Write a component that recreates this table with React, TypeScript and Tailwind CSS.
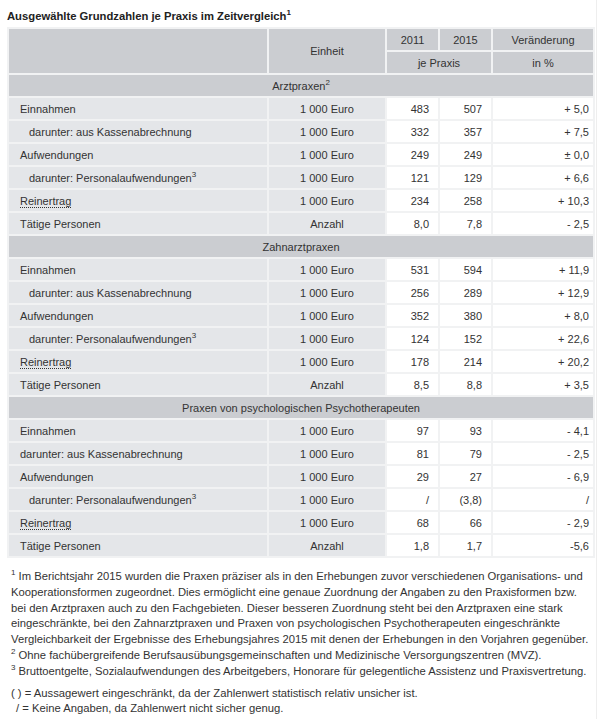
import React from 'react';

type Row = {
  label: string;
  indent?: boolean;
  sup?: string;
  abbr?: boolean;
  unit: string;
  a: string;
  b: string;
  change: string;
};

type Section = { title: string; sup?: string; rows: Row[] };

const sections: Section[] = [
  {
    title: 'Arztpraxen',
    sup: '2',
    rows: [
      { label: 'Einnahmen', unit: '1 000 Euro', a: '483', b: '507', change: '+ 5,0' },
      { label: 'darunter: aus Kassenabrechnung', indent: true, unit: '1 000 Euro', a: '332', b: '357', change: '+ 7,5' },
      { label: 'Aufwendungen', unit: '1 000 Euro', a: '249', b: '249', change: '± 0,0' },
      { label: 'darunter: Personalaufwendungen', indent: true, sup: '3', unit: '1 000 Euro', a: '121', b: '129', change: '+ 6,6' },
      { label: 'Reinertrag', abbr: true, unit: '1 000 Euro', a: '234', b: '258', change: '+ 10,3' },
      { label: 'Tätige Personen', unit: 'Anzahl', a: '8,0', b: '7,8', change: '- 2,5' },
    ],
  },
  {
    title: 'Zahnarztpraxen',
    rows: [
      { label: 'Einnahmen', unit: '1 000 Euro', a: '531', b: '594', change: '+ 11,9' },
      { label: 'darunter: aus Kassenabrechnung', indent: true, unit: '1 000 Euro', a: '256', b: '289', change: '+ 12,9' },
      { label: 'Aufwendungen', unit: '1 000 Euro', a: '352', b: '380', change: '+ 8,0' },
      { label: 'darunter: Personalaufwendungen', indent: true, sup: '3', unit: '1 000 Euro', a: '124', b: '152', change: '+ 22,6' },
      { label: 'Reinertrag', abbr: true, unit: '1 000 Euro', a: '178', b: '214', change: '+ 20,2' },
      { label: 'Tätige Personen', unit: 'Anzahl', a: '8,5', b: '8,8', change: '+ 3,5' },
    ],
  },
  {
    title: 'Praxen von psychologischen Psychotherapeuten',
    rows: [
      { label: 'Einnahmen', unit: '1 000 Euro', a: '97', b: '93', change: '- 4,1' },
      { label: 'darunter: aus Kassenabrechnung', unit: '1 000 Euro', a: '81', b: '79', change: '- 2,5' },
      { label: 'Aufwendungen', unit: '1 000 Euro', a: '29', b: '27', change: '- 6,9' },
      { label: 'darunter: Personalaufwendungen', indent: true, sup: '3', unit: '1 000 Euro', a: '/', b: '(3,8)', change: '/' },
      { label: 'Reinertrag', abbr: true, unit: '1 000 Euro', a: '68', b: '66', change: '- 2,9' },
      { label: 'Tätige Personen', unit: 'Anzahl', a: '1,8', b: '1,7', change: '-5,6' },
    ],
  },
];

// preflight already makes sup relative; just nudge it up
const Sup = ({ n }: { n: string }) => (
  <sup className="relative -top-[5px] text-[8px] leading-none">{n}</sup>
);

export default function App() {
  return (
    <div className="w-[597px] min-h-[719px] border-r border-[#eeeeee] bg-white text-[11px] text-[#333] font-['Liberation_Sans',Arial,sans-serif]">
      <div className="px-[7px] pt-[9px]">
        <h2 className="mb-[4px] text-[11.25px] font-bold leading-[14px] text-[#222]">
          Ausgewählte Grundzahlen je Praxis im Zeitvergleich
          <Sup n="1" />
        </h2>

        <table className="w-[588px] table-fixed border-separate border-spacing-[2px] bg-[#f1f2f3] leading-[14px]">
          <colgroup>
            <col className="w-[258px]" />
            <col className="w-[116px]" />
            <col className="w-[51px]" />
            <col className="w-[51px]" />
            <col className="w-[100px]" />
          </colgroup>
          <thead>
            <tr className="h-[21px] bg-[#cbcdd1]">
              <th rowSpan={2}></th>
              <th rowSpan={2} className="text-center font-normal">Einheit</th>
              <th className="text-center font-normal">2011</th>
              <th className="text-center font-normal">2015</th>
              <th className="text-center font-normal">Veränderung</th>
            </tr>
            <tr className="h-[21px] bg-[#cbcdd1]">
              <th colSpan={2} className="text-center font-normal">je Praxis</th>
              <th className="text-center font-normal">in %</th>
            </tr>
          </thead>
          <tbody>
            {sections.map((s) => (
              <React.Fragment key={s.title}>
                <tr className="h-[21px]">
                  <td colSpan={5} className="bg-[#cbcdd1] text-center">
                    {s.title}
                    {s.sup && <Sup n={s.sup} />}
                  </td>
                </tr>
                {s.rows.map((r, i) => (
                  <tr key={i} className="h-[21px]">
                    <td className={`bg-[#e4e6e9] ${r.indent ? 'pl-[20px]' : 'pl-[11px]'}`}>
                      {r.abbr ? (
                        <span className="border-b border-dotted border-[#333]">{r.label}</span>
                      ) : (
                        r.label
                      )}
                      {r.sup && <Sup n={r.sup} />}
                    </td>
                    <td className="bg-[#e4e6e9] text-center">{r.unit}</td>
                    <td className="bg-white pr-[9px] text-right">{r.a}</td>
                    <td className="bg-white pr-[9px] text-right">{r.b}</td>
                    <td className="bg-white pr-[4px] text-right">{r.change}</td>
                  </tr>
                ))}
              </React.Fragment>
            ))}
          </tbody>
        </table>

        <div className="mt-[11px] pl-[4px] text-[11.25px] leading-[15.8px] whitespace-nowrap">
          <p>
            <Sup n="1" /> Im Berichtsjahr 2015 wurden die Praxen präziser als in den Erhebungen zuvor verschiedenen Organisations- und
            <br />
            Kooperationsformen zugeordnet. Dies ermöglicht eine genaue Zuordnung der Angaben zu den Praxisformen bzw.
            <br />
            bei den Arztpraxen auch zu den Fachgebieten. Dieser besseren Zuordnung steht bei den Arztpraxen eine stark
            <br />
            eingeschränkte, bei den Zahnarztpraxen und Praxen von psychologischen Psychotherapeuten eingeschränkte
            <br />
            Vergleichbarkeit der Ergebnisse des Erhebungsjahres 2015 mit denen der Erhebungen in den Vorjahren gegenüber.
          </p>
          <p>
            <Sup n="2" /> Ohne fachübergreifende Berufsausübungsgemeinschaften und Medizinische Versorgungszentren (MVZ).
          </p>
          <p>
            <Sup n="3" /> Bruttoentgelte, Sozialaufwendungen des Arbeitgebers, Honorare für gelegentliche Assistenz und Praxisvertretung.
          </p>
          <p className="mt-[6px]">( ) = Aussagewert eingeschränkt, da der Zahlenwert statistisch relativ unsicher ist.</p>
          <p className="pl-[5px]">/ = Keine Angaben, da Zahlenwert nicht sicher genug.</p>
        </div>
      </div>
    </div>
  );
}
